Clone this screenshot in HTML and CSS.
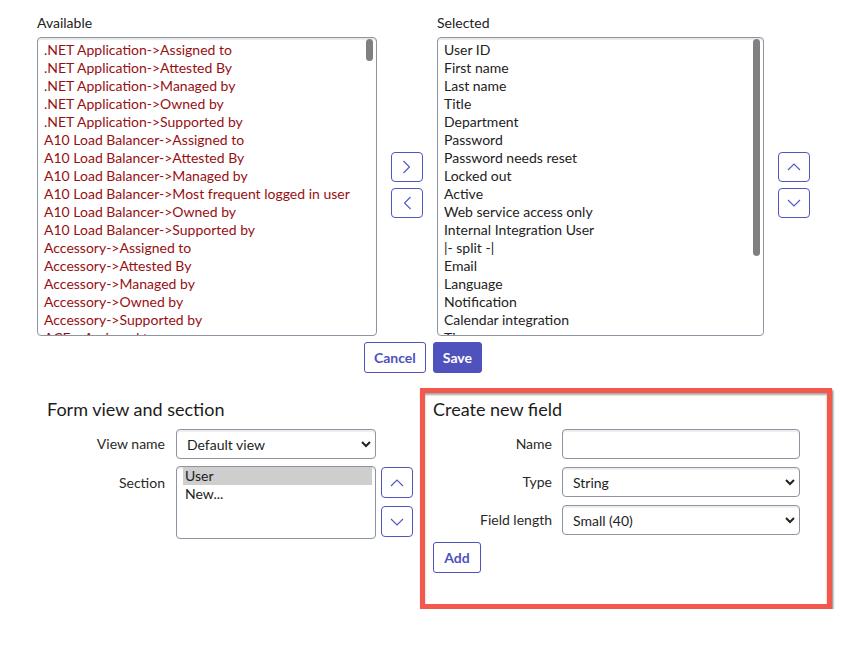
FILE: index.html
```html
<!DOCTYPE html>
<html lang="en">
<head>
	<meta charset="UTF-8">
	<title>Configure form layout</title>
	<link rel="stylesheet" href="styles.css">
</head>
<body>
	<div class="picker">
		<div class="col col-avail">
			<div class="list-label">Available</div>
			<div class="listbox">
				<ul class="options options-avail">
					<li>.NET Application-&gt;Assigned to</li>
					<li>.NET Application-&gt;Attested By</li>
					<li>.NET Application-&gt;Managed by</li>
					<li>.NET Application-&gt;Owned by</li>
					<li>.NET Application-&gt;Supported by</li>
					<li>A10 Load Balancer-&gt;Assigned to</li>
					<li>A10 Load Balancer-&gt;Attested By</li>
					<li>A10 Load Balancer-&gt;Managed by</li>
					<li>A10 Load Balancer-&gt;Most frequent logged in user</li>
					<li>A10 Load Balancer-&gt;Owned by</li>
					<li>A10 Load Balancer-&gt;Supported by</li>
					<li>Accessory-&gt;Assigned to</li>
					<li>Accessory-&gt;Attested By</li>
					<li>Accessory-&gt;Managed by</li>
					<li>Accessory-&gt;Owned by</li>
					<li>Accessory-&gt;Supported by</li>
					<li>ACE-&gt;Assigned to</li>
				</ul>
				<span class="thumb thumb-avail"></span>
			</div>
		</div>
		<div class="btn-stack">
			<button class="icon-btn" title="Add">
				<svg width="16" height="16" viewBox="0 0 16 16"><polyline points="4.5,2 10.5,8 4.5,14"/></svg>
			</button>
			<button class="icon-btn" title="Remove">
				<svg width="16" height="16" viewBox="0 0 16 16"><polyline points="11.5,2 5.5,8 11.5,14"/></svg>
			</button>
		</div>
		<div class="col col-selected">
			<div class="list-label">Selected</div>
			<div class="listbox">
				<ul class="options">
					<li>User ID</li>
					<li>First name</li>
					<li>Last name</li>
					<li>Title</li>
					<li>Department</li>
					<li>Password</li>
					<li>Password needs reset</li>
					<li>Locked out</li>
					<li>Active</li>
					<li>Web service access only</li>
					<li>Internal Integration User</li>
					<li>|- split -|</li>
					<li>Email</li>
					<li>Language</li>
					<li>Notification</li>
					<li>Calendar integration</li>
					<li>Time zone</li>
				</ul>
				<span class="thumb thumb-selected"></span>
			</div>
		</div>
		<div class="btn-stack">
			<button class="icon-btn" title="Move up">
				<svg width="16" height="16" viewBox="0 0 16 16"><polyline points="2,11 8,5 14,11"/></svg>
			</button>
			<button class="icon-btn" title="Move down">
				<svg width="16" height="16" viewBox="0 0 16 16"><polyline points="2,5 8,11 14,5"/></svg>
			</button>
		</div>
	</div>

	<div class="actions">
		<button class="btn">Cancel</button>
		<button class="btn btn-primary">Save</button>
	</div>

	<div class="lower">
		<section class="panel panel-view">
			<h2>Form view and section</h2>
			<div class="form-grid grid-view">
				<label class="field-label">View name</label>
				<select class="field select">
					<option>Default view</option>
				</select>
				<span></span>
				<label class="field-label label-top">Section</label>
				<ul class="listbox section-list">
					<li class="picked">User</li>
					<li>New...</li>
				</ul>
				<div class="btn-stack btn-stack-small">
					<button class="icon-btn" title="Move up">
						<svg width="16" height="16" viewBox="0 0 16 16"><polyline points="2,11 8,5 14,11"/></svg>
					</button>
					<button class="icon-btn" title="Move down">
						<svg width="16" height="16" viewBox="0 0 16 16"><polyline points="2,5 8,11 14,5"/></svg>
					</button>
				</div>
			</div>
		</section>

		<section class="panel panel-new">
			<h2>Create new field</h2>
			<div class="form-grid grid-new">
				<label class="field-label">Name</label>
				<input class="field" type="text">
				<label class="field-label">Type</label>
				<select class="field select">
					<option>String</option>
				</select>
				<label class="field-label">Field length</label>
				<select class="field select">
					<option>Small (40)</option>
				</select>
			</div>
			<button class="btn btn-add">Add</button>
		</section>
	</div>
</body>
</html>
```
FILE: styles.css
```css
*{
	box-sizing: border-box;
	margin: 0;
	padding: 0;
}
body{
	font-family: Lato, "Liberation Sans", sans-serif;
	font-size: 14px;
	color: #222;
	background: #fff;
	padding-top: 14px;
}
ul{
	list-style: none;
}

/* slushbucket */
.picker{
	display: flex;
	column-gap: 14px;
	margin-left: 37px;
}
.col-avail{
	width: 340px;
}
.col-selected{
	width: 327px;
}
.list-label{
	line-height: 18px;
	margin-bottom: 5px;
	color: #222;
}
.listbox{
	position: relative;
	height: 299px;
	border: 1px solid #8f94a3;
	border-radius: 4px;
	overflow: hidden;
	box-shadow: inset 0 2px 1px rgba(0,0,0,0.09);
}
.options{
	padding: 3px 6px;
}
.options li{
	line-height: 18px;
	white-space: nowrap;
}
.options-avail li{
	color: #970f12;
}
.thumb{
	position: absolute;
	right: 3px;
	top: 1px;
	width: 7px;
	border-radius: 4px;
	background: #808080;
}
.thumb-avail{
	height: 22px;
}
.thumb-selected{
	height: 217px;
}

.btn-stack{
	display: flex;
	flex-direction: column;
	gap: 6px;
	align-self: center;
	margin-top: 20px;
}
.icon-btn{
	display: flex;
	align-items: center;
	justify-content: center;
	width: 32px;
	height: 30px;
	background: #fff;
	border: 1px solid #5055c2;
	border-radius: 4px;
}
.icon-btn svg{
	fill: none;
	stroke: #5055c2;
	stroke-width: 1.1;
}

/* buttons */
.actions{
	display: flex;
	justify-content: center;
	gap: 7px;
	width: 772px;
	margin: 6px 0 0 37px;
}
.btn{
	height: 31px;
	padding: 0 9px;
	font-family: Lato, "Liberation Sans", sans-serif;
	font-size: 14px;
	font-weight: bold;
	color: #4f52bd;
	background: #fff;
	border: 1px solid #4f52bd;
	border-radius: 3px;
}
.btn-primary{
	color: #fff;
	background: #4f52bd;
}

/* lower panels */
.lower{
	display: flex;
	margin: 15px 0 0 37px;
}
.panel h2{
	font-size: 18px;
	font-weight: normal;
	line-height: 24px;
	color: #1c1c1c;
	margin-bottom: 8px;
}
.panel-view{
	width: 383px;
	padding: 9px 0 0 10px;
}
.panel-new{
	width: 412px;
	padding: 4px 8px 31px 8px;
	border: 5px solid #f4574b;
	box-shadow: 1px 2px 2px rgba(60,60,60,0.7), inset 0 2px 2px rgba(0,0,0,0.35);
}
.form-grid{
	display: grid;
	align-items: start;
}
.grid-view{
	grid-template-columns: 118px 200px 32px;
	column-gap: 11px;
	row-gap: 7px;
}
.grid-view .btn-stack-small{
	margin: 1px 0 0 -6px;
	gap: 8px;
	align-self: start;
}
.btn-stack-small .icon-btn{
	height: 31px;
}
.grid-new{
	grid-template-columns: 119px 238px;
	column-gap: 10px;
	row-gap: 8px;
	margin-bottom: 7px;
}
.field-label{
	text-align: right;
	line-height: 30px;
	color: #2a2a2a;
}
.label-top{
	padding-top: 2px;
}
.field{
	height: 30px;
	width: 100%;
	padding: 0 10px;
	font-family: Lato, "Liberation Sans", sans-serif;
	font-size: 14px;
	color: #1e1e1e;
	background: #fff;
	border: 1px solid #8f94a3;
	border-radius: 4px;
	box-shadow: inset 0 2px 1px rgba(0,0,0,0.07);
	outline: none;
}
.select{
	appearance: none;
	-webkit-appearance: none;
	background: #fff url("data:image/svg+xml,%3Csvg xmlns='http://www.w3.org/2000/svg' width='10' height='7' viewBox='0 0 10 7'%3E%3Cpolyline points='1,1 5,5 9,1' fill='none' stroke='%23222' stroke-width='2'/%3E%3C/svg%3E") no-repeat right 4px center;
}
.section-list{
	height: 73px;
	width: 200px;
	padding: 0 3px 0 6px;
}
.section-list li{
	line-height: 18px;
	padding-left: 2px;
}
.section-list .picked{
	background: #cecece;
}
.btn-add{
	width: 48px;
	padding: 0;
}
```
